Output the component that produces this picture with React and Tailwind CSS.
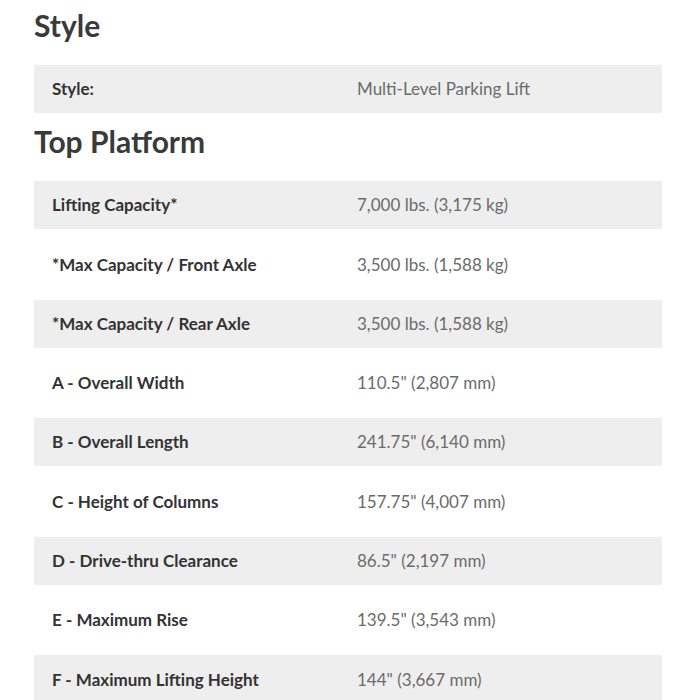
const topPlatform = [
  ["Lifting Capacity*", "7,000 lbs. (3,175 kg)"],
  ["*Max Capacity / Front Axle", "3,500 lbs. (1,588 kg)"],
  ["*Max Capacity / Rear Axle", "3,500 lbs. (1,588 kg)"],
  ["A - Overall Width", "110.5\" (2,807 mm)"],
  ["B - Overall Length", "241.75\" (6,140 mm)"],
  ["C - Height of Columns", "157.75\" (4,007 mm)"],
  ["D - Drive-thru Clearance", "86.5\" (2,197 mm)"],
  ["E - Maximum Rise", "139.5\" (3,543 mm)"],
  ["F - Maximum Lifting Height", "144\" (3,667 mm)"],
];

function SpecRow({ label, value, shaded }) {
  return (
    <div
      className={`grid grid-cols-[305px_1fr] items-center h-[48px] pl-[18px] ${
        shaded ? "bg-[#eeeeee]" : ""
      }`}
    >
      <div className="font-bold text-[17px] text-[#333333]">{label}</div>
      <div className="text-[17px] text-[#6b6b6b]">{value}</div>
    </div>
  );
}

export default function App() {
  return (
    <div
      className="min-h-[700px] bg-white px-[34px] pt-[7px]"
      style={{ fontFamily: "Lato, 'Open Sans', sans-serif" }}
    >
      <div className="w-[628px]">
        <h2 className="text-[30px] leading-[36px] font-bold text-[#3a3a3a] mb-[22px]">
          Style
        </h2>
        <SpecRow label="Style:" value="Multi-Level Parking Lift" shaded />

        <h2 className="text-[30px] leading-[36px] font-bold text-[#3a3a3a] mt-[10px] mb-[22px]">
          Top Platform
        </h2>
        <div className="flex flex-col gap-[11.3px]">
          {topPlatform.map(([label, value], i) => (
            <SpecRow key={label} label={label} value={value} shaded={i % 2 === 0} />
          ))}
        </div>
      </div>
    </div>
  );
}
